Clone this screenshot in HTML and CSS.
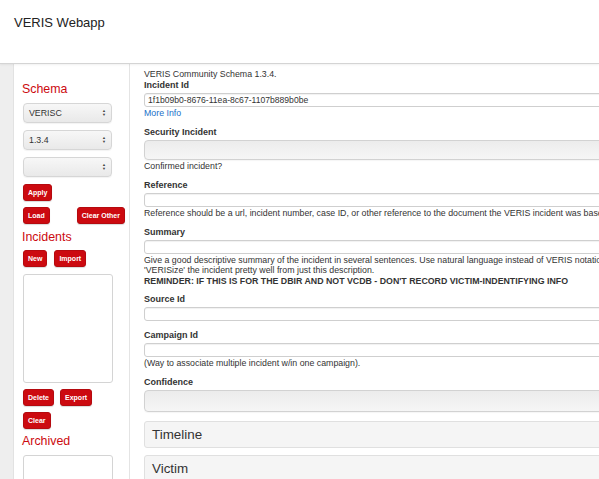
FILE: index.html
```html
<!DOCTYPE html>
<html>
<head>
<meta charset="utf-8">
<title>VERIS Webapp</title>
<link rel="stylesheet" href="styles.css">
</head>
<body>
<header class="topbar">
  <div class="brand">VERIS Webapp</div>
</header>
<div class="layout">
  <div class="gutter"></div>
  <aside class="sidebar">
    <h2 class="side-title first">Schema</h2>
    <div class="sel"><span>VERISC</span><i class="arrows">&#9650;<br>&#9660;</i></div>
    <div class="sel"><span>1.3.4</span><i class="arrows">&#9650;<br>&#9660;</i></div>
    <div class="sel"><span></span><i class="arrows">&#9650;<br>&#9660;</i></div>
    <div class="btn-row r-apply"><button class="btn">Apply</button></div>
    <div class="btn-row r-load"><button class="btn">Load</button><button class="btn clear-other">Clear Other</button></div>
    <h2 class="side-title t-incidents">Incidents</h2>
    <div class="btn-row r-new"><button class="btn">New</button><button class="btn">Import</button></div>
    <div class="listbox"></div>
    <div class="btn-row r-delete"><button class="btn">Delete</button><button class="btn">Export</button></div>
    <div class="btn-row r-clear"><button class="btn">Clear</button></div>
    <h2 class="side-title t-archived">Archived</h2>
    <div class="listbox archived"></div>
  </aside>
  <main class="content">
    <div class="intro">VERIS Community Schema 1.3.4.</div>
    <div class="group g-first">
      <label class="lbl">Incident Id</label>
      <div class="input"><span>1f1b09b0-8676-11ea-8c67-1107b889b0be</span></div>
      <a class="more">More Info</a>
    </div>
    <div class="group g-sec">
      <label class="lbl">Security Incident</label>
      <div class="select-wide"></div>
      <div class="help">Confirmed incident?</div>
    </div>
    <div class="group">
      <label class="lbl">Reference</label>
      <div class="input"></div>
      <div class="help">Reference should be a url, incident number, case ID, or other reference to the document the VERIS incident was based on.</div>
    </div>
    <div class="group">
      <label class="lbl">Summary</label>
      <div class="input"></div>
      <div class="help">Give a good descriptive summary of the incident in several sentences. Use natural language instead of VERIS notation. You should be able to<br>'VERISize' the incident pretty well from just this description.<br><b>REMINDER: IF THIS IS FOR THE DBIR AND NOT VCDB - DON'T RECORD VICTIM-INDENTIFYING INFO</b></div>
    </div>
    <div class="group g-source">
      <label class="lbl">Source Id</label>
      <div class="input"></div>
    </div>
    <div class="group">
      <label class="lbl">Campaign Id</label>
      <div class="input"></div>
      <div class="help">(Way to associate multiple incident w/in one campaign).</div>
    </div>
    <div class="group g-conf">
      <label class="lbl">Confidence</label>
      <div class="select-wide tall"></div>
    </div>
    <div class="panel p-timeline">Timeline</div>
    <div class="panel p-victim">Victim</div>
  </main>
</div>
</body>
</html>
```
FILE: styles.css
```css
html, body {
  margin: 0;
  padding: 0;
  overflow: hidden;
  background: #fff;
}
body {
  font-family: "Liberation Sans", Arial, Helvetica, sans-serif;
  color: #222;
  width: 599px;
  height: 479px;
}
.topbar {
  height: 63px;
  border-bottom: 1px solid #d4d4d4;
  box-shadow: 0 1px 2px rgba(0,0,0,0.06);
  position: relative;
  z-index: 1;
}
.brand {
  padding: 14px 0 0 14px;
  font-size: 13px;
  line-height: 17px;
  color: #222;
}
.layout {
  display: flex;
  height: 415px;
}
.gutter {
  width: 13px;
  flex: none;
  background: #eeeeee;
  border-right: 1px solid #e2e2e2;
}
.sidebar {
  width: 116px;
  flex: none;
  padding: 16px 0 0 9px;
  box-sizing: border-box;
  background: #fff;
  border-right: 1px solid #e4e4e4;
}
.side-title {
  margin: 0;
  font-weight: normal;
  font-size: 12.4px;
  line-height: 18px;
  color: #cc0a0f;
  margin-left: -1px;
}
.side-title.first { margin-bottom: 5px; }
.sel {
  width: 89px;
  height: 20px;
  box-sizing: border-box;
  border: 1px solid #d6d6d6;
  border-radius: 4px;
  background: linear-gradient(#f7f7f7, #e9e9e9);
  box-shadow: 0 1px 1px rgba(0,0,0,0.05);
  display: flex;
  align-items: center;
  justify-content: space-between;
  padding: 0 5px 0 5px;
  font-size: 8.8px;
  color: #333;
  margin-bottom: 7px;
}
.arrows {
  font-style: normal;
  font-size: 4px;
  line-height: 4px;
  color: #444;
  text-align: center;
}
.btn-row {
  display: flex;
  gap: 7px;
}
.btn {
  height: 17px;
  padding: 0 4px;
  border: 1px solid #b50a0f;
  border-radius: 3px;
  background: #cc0a10;
  color: #fff;
  font-family: "Liberation Sans", Arial, sans-serif;
  font-size: 7px;
  font-weight: bold;
  line-height: 15px;
  white-space: nowrap;
  box-shadow: 0 1px 1px rgba(0,0,0,0.15);
}
.r-apply { margin-top: 0; }
.r-load { margin-top: 6px; }
.clear-other { margin-left: 20px; }
.t-incidents { margin-top: 4px; }
.r-new { margin-top: 4px; }
.listbox {
  margin-top: 7px;
  width: 90px;
  height: 109px;
  box-sizing: border-box;
  border: 1px solid #d4d4d4;
  border-radius: 3px;
  background: #fff;
}
.r-delete { margin-top: 6px; gap: 6px; }
.r-clear { margin-top: 6px; }
.t-archived { margin-top: 3px; }
.listbox.archived { margin-top: 5px; height: 40px; }

.content {
  flex: none;
  width: 520px;
  padding: 5px 0 0 14px;
  box-sizing: border-box;
  font-size: 8.8px;
  color: #333;
}
.intro {
  line-height: 10px;
}
.lbl {
  display: block;
  font-weight: bold;
  font-size: 9px;
  line-height: 11px;
  color: #333;
  margin-bottom: 2px;
}
.group { margin-top: 9px; }
.group.g-first { margin-top: 1px; }
.input {
  height: 14px;
  box-sizing: border-box;
  width: 600px;
  border: 1px solid #cfcfcf;
  border-radius: 3px;
  box-shadow: inset 0 1px 1px rgba(0,0,0,0.06);
  background: #fff;
  font-size: 8.6px;
  line-height: 12px;
  padding-left: 3px;
  color: #333;
}
.more {
  display: block;
  color: #1a6fc9;
  line-height: 10px;
  margin-top: 1px;
}
.g-sec { margin-top: 9px; }
.select-wide {
  height: 20px;
  width: 600px;
  box-sizing: border-box;
  border: 1px solid #d2d2d2;
  border-radius: 4px;
  background: linear-gradient(#ececec, #f6f6f6);
  box-shadow: 0 1px 1px rgba(0,0,0,0.04);
}
.select-wide.tall { height: 22px; }
.help {
  line-height: 10.5px;
  white-space: nowrap;
  margin-top: 0.5px;
}
.g-source { margin-top: 8px; }
.g-conf { margin-top: 9px; }
.panel {
  width: 600px;
  box-sizing: border-box;
  height: 27px;
  background: #f5f5f5;
  border: 1px solid #e0e0e0;
  border-radius: 3px;
  font-size: 13.4px;
  line-height: 25px;
  padding-left: 7px;
  color: #333;
}
.p-timeline { margin-top: 9px; }
.p-victim { margin-top: 7px; }
```
